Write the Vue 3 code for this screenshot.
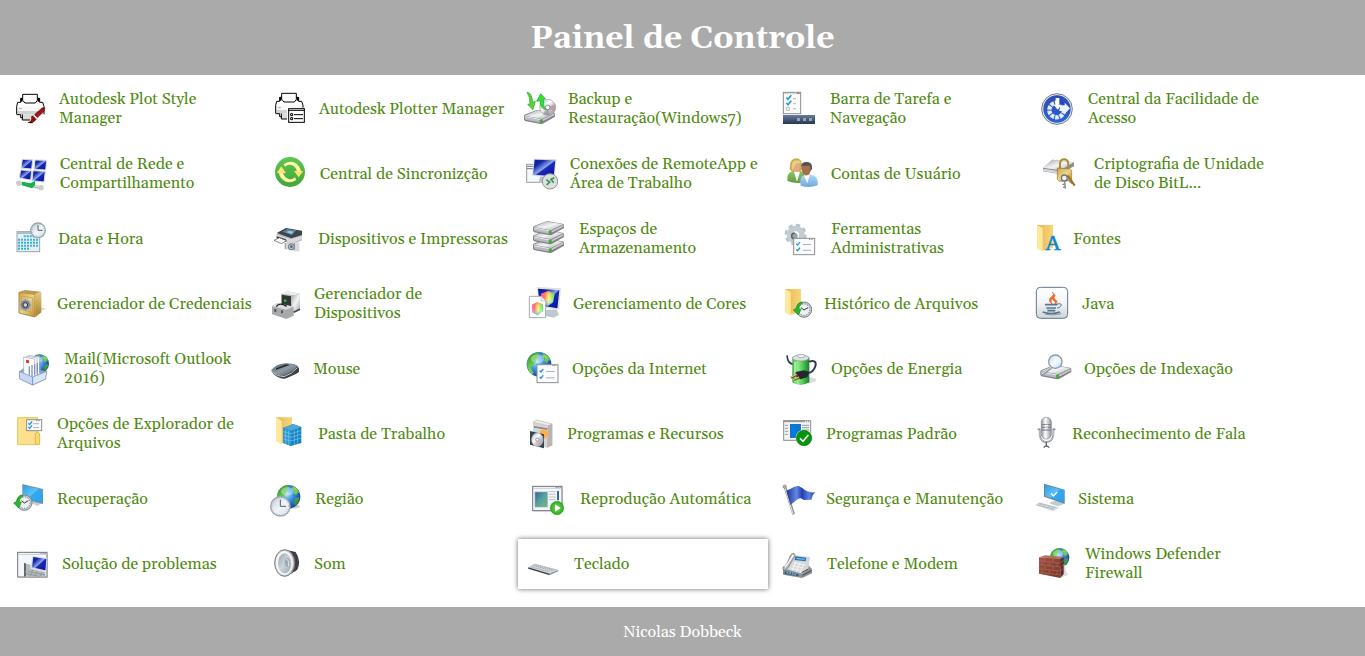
<script setup>
// Icons are drawn on a shared sheet, three sheet units per CSS pixel; each
// tile shows its own 50px-high slice of that sheet.
const clock = (x, y, r) => `
  <circle cx="${x}" cy="${y}" r="${r - 2}" fill="url(#clockFace)" stroke="#9aa6b0" stroke-width="4"/>
  <circle cx="${x}" cy="${y}" r="${r - 6}" fill="none" stroke="#7f8a94" stroke-width="2" stroke-dasharray="2 6"/>
  <path d="M${x} ${y - r * 0.65}V${y}H${x + r * 0.55}" fill="none" stroke="#4a6078" stroke-width="3"/>`

const rewind = (x, y, r) => `
  <circle cx="${x}" cy="${y}" r="${r - 1}" fill="#c6cccd" stroke="#7c8486" stroke-width="3"/>
  <circle cx="${x}" cy="${y}" r="${r - 7}" fill="#eef1f1" stroke="#666f71" stroke-width="3" stroke-dasharray="3 5"/>
  <path d="M${x - 9} ${y - 6}L${x} ${y + 1}L${x + 12} ${y - 6}" fill="none" stroke="#333" stroke-width="3"/>
  <path d="M${x - 8} ${y - r + 1}Q${x - 21} ${y - r + 4} ${x - 23} ${y - 4}L${x - 32} ${y + 1}L${x - 17} ${y + 16}L${x - 9} ${y - 1}L${x - 16} ${y - 3}Q${x - 15} ${y - 14} ${x - 4} ${y - r + 4}Z" fill="#25b92d" stroke="#178a20" stroke-width="2"/>`

const globe = (x, y, r) => `
  <circle cx="${x}" cy="${y}" r="${r}" fill="url(#ocean)"/>
  <path transform="translate(${x} ${y}) scale(${r / 36})" d="M-31 -18Q-20 -34 -4 -35L2 -30L-5 -26L0 -20L-10 -14L-8 -7L-17 -2L-13 6L-23 4L-22 16L-15 25L-21 29Q-42 8 -31 -18ZM12 -33Q28 -26 34 -10L28 -12L24 -4L15 -10L18 -18L9 -23ZM21 5L32 2Q34 16 22 28L15 22Z" fill="url(#land)"/>
  <ellipse cx="${x - 4}" cy="${y - r * 0.45}" rx="${r * 0.55}" ry="${r * 0.35}" fill="#fff" opacity=".35"/>`

const folder = (x, y, h) => `
  <path d="M${x} ${y}H${x + 48}V${y + h - 12}L${x + 16} ${y + h - 4}Z" fill="url(#folderBack)"/>
  <path d="M${x} ${y}L${x + 17} ${y + 10}V${y + h}L${x} ${y + h - 11}Z" fill="#ffe79c"/>`

const dialog = (x, y, w, h) => `
  <rect x="${x + 1}" y="${y + 1}" width="${w}" height="${h}" fill="#fbfbfb" stroke="#8b8f92" stroke-width="3"/>
  <path d="M${x + w - 16} ${y + 4}h12" stroke="#80858a" stroke-width="3" stroke-dasharray="3 2"/>
  <path d="M${x + w * 0.14} ${y + h * 0.35}l4 4l7 -9M${x + w * 0.14} ${y + h * 0.7}l4 4l7 -9" fill="none" stroke="#2f95d4" stroke-width="4"/>
  <path d="M${x + w * 0.45} ${y + h * 0.4}h${w * 0.4}M${x + w * 0.45} ${y + h * 0.75}h${w * 0.4}" stroke="#aab2b8" stroke-width="3"/>`

const drive = (x, y) => `
  <path d="M${x} ${y + 19}Q${x} ${y + 15} ${x + 5} ${y + 13}L${x + 36} ${y + 1}Q${x + 41} ${y - 1} ${x + 46} ${y}L${x + 88} ${y + 7}Q${x + 93} ${y + 8} ${x + 93} ${y + 12}V${y + 20}L${x + 56} ${y + 41}L${x + 50} ${y + 42}L${x + 3} ${y + 33}L${x} ${y + 29}Z" fill="#808286"/>
  <path d="M${x + 2} ${y + 17}L${x + 36} ${y + 2}Q${x + 41} ${y} ${x + 46} ${y + 1}L${x + 90} ${y + 9}L${x + 54} ${y + 27}Z" fill="url(#metal)"/>
  <path d="M${x + 2} ${y + 20}L${x + 50} ${y + 29}V${y + 38}L${x + 4} ${y + 29}Z" fill="#b9bac3"/>
  <path d="M${x + 3} ${y + 20}L${x + 50} ${y + 29}" stroke="#eceef2" stroke-width="3"/>
  <path d="M${x + 56} ${y + 31}L${x + 91} ${y + 13}" stroke="#c9cacc" stroke-width="5"/>
  <path d="M${x + 50} ${y + 29}v10" stroke="#2bbf1f" stroke-width="6"/>`

const win = (x, y, w, h) => `
  <rect x="${x + 3}" y="${y + 4}" width="${w}" height="${h}" fill="#ddd"/>
  <rect x="${x + 1}" y="${y + 1}" width="${w}" height="${h}" fill="#f4f6f8" stroke="#6f767e" stroke-width="3"/>
  <path d="M${x + 2} ${y + 7}h${w - 2}" stroke="#c8ced5" stroke-width="3"/>
  <path d="M${x + w - 18} ${y + 4}h15" stroke="#5f6a75" stroke-width="3" stroke-dasharray="3 3"/>`

const printer = (x, y) => `
  <path d="M${x + 2} ${y + 36}V${y + 26}H${x + 14}V${y + 14}H${x + 72}V${y + 26}H${x + 84}V${y + 62}H${x + 72}V${y + 69}H${x + 18}V${y + 62}H${x + 2}Z" fill="#fff"/>
  <path d="M${x + 4} ${y + 40}H${x + 82}V${y + 62}H${x + 4}Z" fill="#d2d2d2"/>
  <path d="M${x + 4} ${y + 38}H${x + 80}V${y + 52}H${x + 4}Z" fill="#f8f8f8"/>
  <path d="M${x + 2} ${y + 62}V${y + 38}L${x + 5} ${y + 26}H${x + 14}V${y + 14}H${x + 20}M${x + 65} ${y + 14}H${x + 71}V${y + 26}H${x + 80}L${x + 84} ${y + 38}V${y + 62}M${x + 2} ${y + 63}H${x + 14}V${y + 72}H${x + 22}" fill="none" stroke="#000" stroke-width="3"/>
  <path d="M${x + 9} ${y + 45}h9" stroke="#aaa" stroke-width="3"/>
  <path d="M${x + 20} ${y + 2}H${x + 64}V${y + 20}L${x + 58} ${y + 28}H${x + 27}L${x + 20} ${y + 20}Z" fill="#fff" stroke="#000" stroke-width="3"/>
  <path d="M${x + 14} ${y + 14}h5v10h-5ZM${x + 65} ${y + 14}h6v10h-6Z" fill="#000"/>
  <path d="M${x + 19} ${y + 62}h42v8l-10 9h-30Z" fill="#dcdcdc"/>
  <path d="M${x + 19} ${y + 62}V${y + 79}H${x + 42}" fill="none" stroke="#000" stroke-width="3"/>`

const shield = (d) =>
  `<path d="${d}" fill="url(#rainbow)"/><path d="${d}" fill="url(#rainbowFade)"/>`

const items = [
  { label: 'Autodesk Plot Style\nManager', w: 51, art: printer(48, 56) + '<path d="M83 142Q95 139 94 128L102 124L108 131Q101 143 83 144Z" fill="#a50000"/><path d="M88 143H98L110 131M93 127L101 122" fill="none" stroke="#000" stroke-width="3"/><path d="M103 120L127 99H135L133 106L111 128Z" fill="#b80c0c"/><path d="M104 119L126 99H136M112 129L134 106" fill="none" stroke="#000" stroke-width="2"/><path d="M101 121L110 130" stroke="#fff" stroke-width="4"/>' },
  { label: 'Autodesk Plotter Manager', w: 56, art: printer(45, 53) + '<rect x="81" y="98" width="58" height="50" fill="#fff"/><rect x="86" y="101" width="47" height="41" fill="#fff" stroke="#000" stroke-width="3"/><path d="M85 106h49" stroke="#000" stroke-width="3"/><path d="M92 116h6v6h-6zM92 128h6v6h-6z" fill="#fff" stroke="#000" stroke-width="3"/><path d="M102 119h27M102 131h27" stroke="#000" stroke-width="3"/>' },
  { label: 'Backup e\nRestauração(Windows7)', w: 50, art: drive(27, 105) + '<circle cx="98" cy="97" r="24" fill="url(#disc)" stroke="#9a9da5" stroke-width="2"/><path d="M98 97L121 88Q124 98 118 110Z" fill="#b58a97" opacity=".6"/><path d="M98 97L84 116Q94 123 104 120Z" fill="#7d868c" opacity=".5"/><circle cx="98" cy="97" r="7" fill="#fff" stroke="#888" stroke-width="3"/><path d="M36 52Q50 52 53 82L61 79L54 104L38 88L45 87Q45 65 36 52Z" fill="#54d634" stroke="#2b9c22" stroke-width="2"/><path d="M92 104Q76 101 75 77L65 79L77 56L91 71L85 74Q84 93 92 104Z" fill="#39dd35" stroke="#1ca31e" stroke-width="2"/>' },
  { label: 'Barra de Tarefa e\nNavegação', w: 57, art: '<rect x="40" y="52" width="52" height="64" fill="#fbfbfb" stroke="#8b8b8b" stroke-width="3"/><path d="M42 56h46" stroke="#bbb" stroke-width="2"/><path d="M81 55h8" stroke="#d94a4a" stroke-width="3"/><path d="M49 68l5 5l10-12M49 84l5 5l10-12" fill="none" stroke="#269bd3" stroke-width="5"/><path d="M49 97h9v9h-9z" fill="none" stroke="#b9b9b9" stroke-width="3"/><path d="M69 71h9M69 86h9M69 101h9" stroke="#bbb" stroke-width="3"/><rect x="39" y="120" width="96" height="27" fill="url(#bar)"/><path d="M81 129h9v9h-9zM99 129h9v9h-9zM117 129h9v9h-9z" fill="#97a3b9"/>' },
  { label: 'Central da Facilidade de\nAcesso', w: 60, art: '<circle cx="96" cy="102" r="46" fill="#e4e6ea" stroke="#777e88" stroke-width="3"/><circle cx="96" cy="102" r="41" fill="url(#royal)"/><circle cx="95" cy="105" r="22" fill="none" stroke="#e6ecfb" stroke-width="13" stroke-dasharray="11 3"/><path d="M97 66L134 99L97 102Z" fill="#1e4fc0"/><path d="M92 69h11v20h7l-12 15l-12-15h6z" fill="#fff"/><path d="M106 91h13v-8l16 17l-16 17v-9h-16z" fill="#f0f4ff"/>' },

  { label: 'Central de Rede e\nCompartilhamento', w: 52, art: '<g stroke="#d7dcde" stroke-width="3" fill="url(#navy)"><path d="M67 253L98 254L95 282L63 279Z"/><path d="M105 255L140 256L137 285L102 283Z"/><path d="M62 285L95 287L92 315L58 309Z"/><path d="M99 287L136 289L132 321L96 317Z"/></g><path d="M50 322L128 340" stroke="#aeb6b6" stroke-width="9"/><path d="M50 321L127 338" stroke="#eef1f1" stroke-width="3"/><circle cx="57" cy="325" r="8" fill="#c7cecc"/><circle cx="123" cy="338" r="8" fill="#c7cecc"/><path d="M66 320L92 325L105 317V331L96 340L66 331Z" fill="#13b350"/>' },
  { label: 'Central de Sincronizção', w: 57, art: '<circle cx="90" cy="291" r="45" fill="url(#sync)"/><g fill="#fff3a5"><path d="M71 268Q97 251 116 273Q122 281 123 290H111Q107 273 94 270Q83 267 75 275Z"/><path d="M109 315Q83 331 63 309Q57 301 56 291H68Q73 308 86 312Q97 315 105 307Z"/></g><g fill="#ffe36c"><path d="M102 288H130L116 307Z"/><path d="M50 294L64 274L78 294Z"/></g>' },
  { label: 'Conexões de RemoteApp e\nÁrea de Trabalho', w: 52, art: '<rect x="35" y="268" width="46" height="54" fill="#f6f7f8" stroke="#999fa5" stroke-width="3"/><path d="M36 274h18M36 281h18" stroke="#6e7c8d" stroke-width="3"/><path d="M75 306H100L107 320L70 325Z" fill="#b7bfc9"/><path d="M56 251L124 253L119 307L51 302Z" fill="#d7dce4"/><path d="M59 254L121 256L116 303L54 299Z" fill="url(#navy)"/><circle cx="105" cy="319" r="23" fill="#dedfdf" stroke="#919494" stroke-width="3"/><path d="M94 314L104 321L95 330M118 308L108 313L116 323" fill="none" stroke="#3a9150" stroke-width="5"/>' },
  { label: 'Contas de Usuário', w: 58, art: '<path d="M52 318Q50 294 67 288L86 284L103 294V322Q75 327 52 318Z" fill="url(#greenBody)"/><path d="M71 288L81 320L90 290Z" fill="#fff"/><path d="M59 282Q58 250 79 250Q99 250 97 283L88 290H66Z" fill="#c9ab50"/><ellipse cx="80" cy="274" rx="11" ry="17" fill="#e2aa82"/><path d="M65 281Q62 254 82 256Q91 256 94 265Q75 259 69 286Z" fill="#e6d27c"/><path d="M92 332Q88 306 99 302L116 297L135 304Q146 313 143 331Q116 341 92 332Z" fill="url(#blueBody)"/><path d="M102 302L112 325L119 300Z" fill="#fff"/><ellipse cx="109" cy="282" rx="14" ry="19" fill="#a76f4d"/><path d="M94 276Q93 260 111 261Q128 261 126 282L122 289L120 272H98Z" fill="#4d5257"/>' },
  { label: 'Criptografia de Unidade\nde Disco BitL...', w: 66, art: '<path d="M54 279L82 254L147 262V274L103 297L55 289Z" fill="#8b8d93"/><path d="M54 278L82 254L147 262L105 286Z" fill="url(#metal)"/><path d="M55 281L103 289V296L55 288Z" fill="#d7d8df"/><path d="M105 283V266Q106 253 118 253Q130 254 130 269V284" fill="none" stroke="#b18a35" stroke-width="6"/><path d="M97 279L134 282L140 287V317L103 319L97 313Z" fill="url(#gold)" stroke="#9d761f" stroke-width="2"/><path d="M128 302L137 314L149 332M137 314L136 323M143 322L139 326" fill="none" stroke="#9a7424" stroke-width="6"/><circle cx="118" cy="309" r="9" fill="#eee" stroke="#737678" stroke-width="4"/><path d="M119 318L121 341M120 327L112 329M120 335L114 337" stroke="#84888c" stroke-width="4"/>' },

  { label: 'Data e Hora', w: 50, art: '<rect x="51" y="470" width="68" height="60" fill="#e8eef2" stroke="#9aa5ad" stroke-width="3"/><path d="M52 471h67v6h-67z" fill="#b0bdc7"/><path d="M71 484h46M54 494h63M54 503h63M54 512h63M54 521h36" stroke="#34b5d3" stroke-width="6" stroke-dasharray="6 3"/>' + clock(114, 466, 24) },
  { label: 'Dispositivos e Impressoras', w: 55, art: '<path d="M50 476V492L96 508L126 496V478Z" fill="#b6b9bc"/><path d="M50 474L78 459L126 467V480L94 490Z" fill="#3f444a"/><path d="M67 470L82 462L109 466L96 480Z" fill="#5f7f98"/><path d="M78 471L88 467L101 470L94 477Z" fill="#8ecbf0"/><path d="M50 479L94 493L126 482V492L94 505L50 488Z" fill="#d8dadd"/><path d="M50 484L78 493V500L50 490Z" fill="#333"/><path d="M42 496L58 488L80 497L64 506Z" fill="#f8f8f8" stroke="#555" stroke-width="2"/><path d="M74 502L86 505L88 499L99 502L101 498L118 503V530L74 523Z" fill="#d8d9dc"/><path d="M76 504V522M103 502V526" stroke="#999ca0" stroke-width="3"/><circle cx="94" cy="515" r="9" fill="#b8c2cb" stroke="#697179" stroke-width="3"/><circle cx="94" cy="515" r="4" fill="#526475"/>' },
  { label: 'Espaços de\nArmazenamento', w: 61, art: drive(54, 492) + drive(54, 466) + drive(54, 439) },
  { label: 'Ferramentas\nAdministrativas', w: 58, art: '<circle cx="77" cy="479" r="28" fill="none" stroke="#b5c2ca" stroke-width="10" stroke-dasharray="12 10"/><circle cx="77" cy="479" r="19" fill="none" stroke="#c2ccd2" stroke-width="17"/><circle cx="73" cy="483" r="10" fill="#9aa3a9"/><path d="M74 474A9 9 0 0 0 74 492" fill="none" stroke="#555d63" stroke-width="4"/>' + dialog(70, 489, 63, 49) },
  { label: 'Fontes', w: 45, art: folder(36, 450, 81) + '<text x="84" y="524" text-anchor="middle" font-family="Liberation Serif, serif" font-size="64" fill="#0b87ce" stroke="#0b87ce" stroke-width="2">A</text>' },

  { label: 'Gerenciador de Credenciais', w: 49, art: '<path d="M104 718L139 700L120 698Z" fill="#ddd"/><path d="M57 651L75 645L124 650L106 658Z" fill="#b99a52"/><path d="M57 652L105 658V726L57 714Z" fill="url(#gold)" stroke="#b28a34" stroke-width="3"/><path d="M105 658L124 650V712L106 726Z" fill="url(#goldSide)"/><path d="M64 663L98 669V712L64 704Z" fill="none" stroke="#caa651" stroke-width="3"/><circle cx="76" cy="690" r="16" fill="#75797d" stroke="#b3b7ba" stroke-width="5"/><path d="M76 672v36M59 690h34M64 678l24 24M88 678l-24 24" stroke="#8b8f93" stroke-width="3"/><circle cx="76" cy="690" r="7" fill="#cfd2d4" stroke="#34383a" stroke-width="3"/>' },
  { label: 'Gerenciador de\nDispositivos', w: 51, art: '<path d="M64 657L82 649L120 656V703L98 714L64 702Z" fill="#b8babc"/><path d="M64 656L82 649L120 656L102 661Z" fill="#eee"/><path d="M65 659L93 664V701L65 695Z" fill="#303634"/><path d="M93 662L120 657V703L98 711Z" fill="url(#metal)"/><path d="M72 677h7" stroke="#21e437" stroke-width="6"/><path d="M36 694L52 684L101 695V722L79 732L36 718Z" fill="#a7aaac"/><path d="M36 694L52 684L101 695L78 704Z" fill="#ddd"/><path d="M49 695Q58 680 80 694" fill="none" stroke="#222" stroke-width="4"/><path d="M46 702v9M66 706v9" stroke="#55595a" stroke-width="6"/><path d="M101 712L120 703" stroke="#444" stroke-width="5"/>' },
  { label: 'Gerenciamento de Cores', w: 55, art: '<path d="M91 705L125 703L132 720L116 728L89 722Z" fill="#c1c8cd"/><path d="M66 636L138 640L132 704L72 697Z" fill="#dce0e4"/><path d="M69 641L133 646L127 700L74 691Z" fill="url(#navy)"/>' + shield('M78 656L100 648L119 656L114 682L98 693L80 682Z') + '<path d="M43 664H78L92 677V728H43Z" fill="#fff" stroke="#aaa" stroke-width="3"/><path d="M78 664V678H92" fill="#eee" stroke="#bbb" stroke-width="2"/>' + shield('M51 689L67 682L84 688V708L68 721L52 712Z') },
  { label: 'Histórico de Arquivos', w: 51, art: folder(45, 642, 81) + rewind(102, 704, 24) },
  { label: 'Java', w: 54, art: '<rect x="34" y="637" width="94" height="93" rx="12" fill="url(#javaBg)" stroke="#60798c" stroke-width="3"/><path d="M82 651Q90 659 80 665Q65 675 82 688Q74 675 84 669Q94 661 82 651ZM91 661Q74 672 91 680Q92 684 87 690Q100 683 94 676Q82 670 91 661Z" fill="#ef6934" stroke="#ef6934" stroke-width="2"/><path d="M60 689H97M64 699H93M67 707H91" stroke="#56768f" stroke-width="5"/><path d="M96 687Q114 684 107 694Q103 699 96 699" fill="none" stroke="#56768f" stroke-width="3"/><path d="M53 711Q78 720 105 711" fill="none" stroke="#56768f" stroke-width="4"/><path d="M61 718Q85 722 109 716" fill="none" stroke="#7d95a8" stroke-width="3"/>' },

  { label: 'Mail(Microsoft Outlook\n2016)', w: 56, art: globe(119, 71, 28) + '<path d="M58 94L75 82L140 94L137 118L98 136L60 117Z" fill="#8ba3d1"/><g fill="#fff" stroke="#9ba7b8" stroke-width="2"><path d="M86 46L119 51V104L86 99Z"/><path d="M79 48L111 54V109L79 103Z"/><path d="M71 51L104 57V112L71 105Z"/></g><path d="M78 59l9 2v9l-9-2z" fill="#e73d22"/><path d="M88 79V105M96 75V108M104 72V104M112 68V101M120 65V97" stroke="#7e97b8" stroke-width="4"/><path d="M58 94L98 111V135L59 117Z" fill="#c9d7f3" stroke="#7088bc" stroke-width="2"/><path d="M98 111L140 94L137 117L98 135Z" fill="#dbe5f8" stroke="#7088bc" stroke-width="2"/>' },
  { label: 'Mouse', w: 50, art: '<path d="M35 96Q53 117 74 116Q103 106 117 96V85Q111 72 93 71Z" fill="#3b4147"/><path d="M33 91Q49 72 75 70Q96 68 113 78Q96 98 70 107Q46 108 33 91Z" fill="url(#mouse)"/><path d="M35 95Q52 111 72 110Q97 102 112 83" fill="none" stroke="#c3cad0" stroke-width="3"/><path d="M48 89L82 77L89 75L79 73L48 85Z" fill="#22272b"/>' },
  { label: 'Opções da Internet', w: 54, art: globe(72, 73, 37) + dialog(65, 73, 63, 54) },
  { label: 'Opções de Energia', w: 58, art: '<ellipse cx="110" cy="120" rx="29" ry="10" fill="#ddd"/><path d="M51 46Q53 72 71 73" fill="none" stroke="#353b50" stroke-width="5"/><path d="M67 52V127Q91 143 118 127V52Q92 40 67 52Z" fill="url(#battery)"/><ellipse cx="92" cy="54" rx="25" ry="9" fill="#dbe0e2" stroke="#8b9293" stroke-width="2"/><ellipse cx="94" cy="48" rx="11" ry="5" fill="#f2f5f7" stroke="#89949b" stroke-width="2"/><path d="M75 65V126" stroke="#e0f7dd" stroke-width="5" opacity=".7"/><path d="M117 65Q139 58 137 76Q130 99 114 99" fill="none" stroke="#353b50" stroke-width="6"/><path d="M77 96L102 91L118 96L112 112L91 118L77 108Z" fill="#252831"/><path d="M82 104L63 113M88 112L71 120" stroke="#75531d" stroke-width="7"/><path d="M80 103L63 111M87 111L70 119" stroke="#f1dc97" stroke-width="3"/>' },
  { label: 'Opções de Indexação', w: 56, art: drive(46, 76) + '<path d="M77 83L50 105" stroke="#8d94a0" stroke-width="8"/><path d="M77 82L50 103" stroke="#edf0f2" stroke-width="3"/><circle cx="91" cy="65" r="20" fill="url(#lens)" stroke="#8f9aa3" stroke-width="4"/>' },

  { label: 'Opções de Explorador de\nArquivos', w: 49, art: '<path d="M53 233H113V314H53Z" fill="#fce08b" stroke="#e5c558" stroke-width="3"/><path d="M60 236V313" stroke="#f8e8ad" stroke-width="3"/><path d="M106 313V282Q113 270 119 282V313Z" fill="#f7d779" stroke="#dfb948" stroke-width="3"/>' + dialog(79, 238, 45, 33) },
  { label: 'Pasta de Trabalho', w: 55, art: folder(48, 232, 82) + '<path d="M69 264L99 252L124 261V309L92 318L69 309Z" fill="#1682c4"/><path d="M69 264L99 252L124 261L94 272Z" fill="#4aa9da"/><path d="M69 266L94 273V317L69 308Z" fill="#2f98d2"/><path d="M71 275L93 281L123 272M71 286L93 292L123 283M71 297L93 303L123 294M77 268V311M86 271V314M103 271V314M113 268V311" fill="none" stroke="#79c8f0" stroke-width="2"/>' },
  { label: 'Programas e Recursos', w: 49, art: '<path d="M54 247L65 240L112 252V316L96 323L54 308Z" fill="#d7d4d4"/><path d="M54 247L65 240L112 252L99 257Z" fill="#eee" stroke="#bbb" stroke-width="2"/><path d="M99 257L112 252V316L96 323Z" fill="#b9b3b2"/><path d="M57 258L97 265V270L57 263Z" fill="#8e8585"/><circle cx="86" cy="282" r="14" fill="#ffad51"/><path d="M54 269Q63 258 76 270L70 287L55 283Z" fill="#c3ded7"/><path d="M45 273L87 283V325L45 314Z" fill="#39434d"/><ellipse cx="67" cy="299" rx="17" ry="20" fill="url(#disc)" stroke="#ccc" stroke-width="2"/><circle cx="67" cy="299" r="5" fill="#fff" stroke="#8e979f" stroke-width="3"/>' },
  { label: 'Programas Padrão', w: 53, art: '<rect x="41" y="242" width="81" height="59" fill="#f4f4f4" stroke="#8c8c8c" stroke-width="3"/><path d="M41 244h81" stroke="#9a9a9a" stroke-width="5"/><path d="M105 244h15" stroke="#fff" stroke-width="3" stroke-dasharray="3 3"/><path d="M45 256h9M45 265h9M45 274h9M45 283h9M96 256h21M96 263h21M96 270h21" stroke="#999" stroke-width="3"/><rect x="60" y="252" width="33" height="42" fill="#0878d6"/><circle cx="102" cy="294" r="25" fill="#fff"/><circle cx="102" cy="294" r="23" fill="#07950b" stroke="#08720a" stroke-width="2"/><path d="M90 295l9 9l16-19" fill="none" stroke="#fff" stroke-width="5"/>' },
  { label: 'Reconhecimento de Fala', w: 44, art: '<path d="M38 268h6v19Q49 306 64 306Q81 306 85 287V268h6" fill="none" stroke="#7f838d" stroke-width="5"/><path d="M39 270h4v19Q48 304 64 304Q81 304 86 289V270" fill="none" stroke="#e4e6eb" stroke-width="2"/><rect x="49" y="232" width="30" height="65" rx="14" fill="url(#mic)" stroke="#82858d" stroke-width="2"/><path d="M50 254h28M50 262h28M50 270h28" stroke="#737780" stroke-width="3"/><path d="M60 256h9M60 264h9" stroke="#fff" stroke-width="3"/><path d="M64 305V320M56 323Q64 313 73 323" fill="none" stroke="#5f636e" stroke-width="4"/>' },

  { label: 'Recuperação', w: 49, art: '<path d="M88 487L108 480L127 489L112 498Z" fill="#c7cdd0"/><path d="M67 432L129 447V492L67 477Z" fill="#7d9197"/><path d="M69 435L127 449V488L69 474Z" fill="url(#screen)"/>' + rewind(73, 488, 24) },
  { label: 'Região', w: 52, art: '<ellipse cx="95" cy="499" rx="25" ry="7" fill="#ccc"/>' + globe(86, 470, 35) + clock(61, 499, 31) },
  { label: 'Reprodução Automática', w: 62, art: win(52, 438, 88, 73) + '<rect x="60" y="456" width="37" height="45" fill="url(#picture)" stroke="#9daab5" stroke-width="2"/><path d="M101 455h21M101 463h21M101 471h21M101 479h21" stroke="#bdc3c9" stroke-width="3"/><path d="M129 453v28" stroke="#3467a8" stroke-width="6"/><circle cx="126" cy="504" r="20" fill="url(#play)" stroke="#36a425" stroke-width="2"/><path d="M120 493L137 504L120 515Z" fill="#fff"/>' },
  { label: 'Segurança e Manutenção', w: 53, art: '<path d="M46 444L71 523" stroke="#8e9095" stroke-width="8"/><path d="M45 444L69 522" stroke="#e8e8eb" stroke-width="3"/><circle cx="44" cy="440" r="5" fill="#b6b8bb" stroke="#777" stroke-width="2"/><path d="M49 452L62 446Q76 436 86 438L98 445Q112 459 135 457Q126 465 124 479L101 480Q91 470 80 480L61 495Z" fill="url(#flag)"/>' },
  { label: 'Sistema', w: 50, art: '<path d="M71 489L103 477L119 491L99 499Z" fill="#bfcdd3"/><path d="M57 431L119 449V491L57 470Z" fill="#688491"/><path d="M60 435L117 451V487L60 468Z" fill="url(#screen)"/><path d="M78 460l7 8l12-12" fill="none" stroke="#fff" stroke-width="4"/><path d="M30 495L43 487L103 503L84 514Z" fill="#d4dde1"/><path d="M37 495L87 508M42 490L94 503M48 490L43 497M60 493L55 501M73 497L68 505M85 500L80 508" stroke="#a3afb5" stroke-width="2"/>' },

  { label: 'Solução de problemas', w: 54, art: win(52, 636, 88, 74) + '<path d="M72 668L79 671V707L72 710Z" fill="#5f6669"/><path d="M79 671L92 674V704L79 708Z" fill="#b4babd"/><path d="M76 694L94 686L136 697V710L83 710Z" fill="#b3b9bc"/><path d="M97 648L141 654L137 695L92 685Z" fill="#d4dce4"/><path d="M100 651L139 657L136 691L96 682Z" fill="url(#navy)"/><path d="M83 694L136 705M76 700L117 709M98 690L90 708M112 695L103 709M126 698L119 710" stroke="#848d94" stroke-width="2"/>' },
  { label: 'Som', w: 51, art: '<path d="M75 629L107 636Q125 666 111 690L79 709Z" fill="#38383b"/><path d="M96 634V701M105 637V695M112 647V687" stroke="#55555a" stroke-width="2"/><ellipse cx="74" cy="669" rx="30" ry="40" fill="#c0c1c6" stroke="#808188" stroke-width="3"/><ellipse cx="73" cy="669" rx="26" ry="36" fill="#f4f6f6"/><ellipse cx="74" cy="670" rx="20" ry="30" fill="url(#cone)"/><ellipse cx="82" cy="667" rx="8" ry="13" fill="#9da9b4"/><path d="M78 657Q90 661 85 678" fill="none" stroke="#e8edf0" stroke-width="3"/>' },
  { label: 'Teclado', w: 56, active: true, art: '<path d="M39 683L58 671L130 690V694L103 706L39 686Z" fill="#8a8f95"/><path d="M40 682L60 671L130 690L103 701Z" fill="#d2d6da"/><path d="M49 681L103 696M55 677L113 692M60 674L120 690" stroke="#9198a0" stroke-width="2" stroke-dasharray="5 2"/><path d="M40 684L103 703" fill="none" stroke="#30363d" stroke-width="3"/>' },
  { label: 'Telefone e Modem', w: 54, art: '<path d="M39 686L65 660L112 673L126 687V700L96 714L39 704Z" fill="#8b8e92"/><path d="M39 685L78 646L120 651L115 688L95 701Z" fill="#d4d6d9"/><path d="M76 649L109 653L107 664L74 660Z" fill="#286eaa"/><path d="M80 653L104 656V660L79 657Z" fill="#70c5ea"/><path d="M70 669L104 675M66 677L99 684M62 684L93 691M80 663L67 690M91 666L79 695M103 671L90 698" stroke="#f2f4f6" stroke-width="3"/><path d="M39 681Q47 680 57 657Q61 640 72 640Q79 645 70 656L55 681Q48 694 39 689Z" fill="#b9bcc1" stroke="#6a6e73" stroke-width="2"/><path d="M45 681Q60 663 70 645" fill="none" stroke="#fff" stroke-width="4"/><path d="M44 694L85 703V709L44 702Z" fill="#2a6077"/><path d="M50 698L81 705" stroke="#80c1d6" stroke-width="4" stroke-dasharray="5 3"/><path d="M98 706L124 692M95 698L115 687" stroke="#444a50" stroke-width="3"/>' },
  { label: 'Windows Defender\nFirewall', w: 57, art: '<path d="M108 713L130 704L120 692Z" fill="#ddd"/>' + globe(104, 653, 29) + '<path d="M109 711L123 696L119 674L112 671Z" fill="#d7d7d7"/><path d="M42 652L61 646L116 651L106 657Z" fill="#b5705c"/><path d="M42 652L106 657V714L42 701Z" fill="url(#brick)"/><path d="M106 657L116 651V702L106 714Z" fill="#5c271f"/><path d="M42 662L106 669M42 674L106 681M42 686L106 693M42 697L106 705M59 653V664M83 656V667M51 664V675M73 666V678M96 669V680M60 676V688M84 679V691M51 688V699M73 690V703M96 693V705M106 669L116 661M106 681L116 673M106 693L116 685" fill="none" stroke="#a8695a" stroke-width="2"/>' }
]

const sheetTops = [27, 222, 417, 612, 12, 207, 402, 597]
const viewBoxOf = (item, i) =>
  `${i % 5 === 0 ? 24 : 9} ${sheetTops[Math.floor(i / 5)]} ${item.w * 3} 150`
</script>

<template>
  <div class="page">
    <header class="header">
      <h1>Painel de Controle</h1>
    </header>

    <main class="grid">
      <a
        v-for="(item, i) in items"
        :key="item.label"
        href="#"
        class="tile"
        :class="{ active: item.active }"
      >
        <svg
          class="icon"
          :width="item.w"
          height="50"
          :viewBox="viewBoxOf(item, i)"
          aria-hidden="true"
          v-html="item.art"
        ></svg>
        <span class="label">{{ item.label }}</span>
      </a>
    </main>

    <footer class="footer">Nicolas Dobbeck</footer>

    <svg class="paints" width="0" height="0" aria-hidden="true">
      <defs>
        <linearGradient id="navy" x1="0" y1="0" x2="1" y2="1"><stop offset="0" stop-color="#0b1b8e" /><stop offset=".25" stop-color="#1327ac" /><stop offset=".5" stop-color="#8fa6ea" /><stop offset=".55" stop-color="#1a2cb8" /><stop offset="1" stop-color="#0308a0" /></linearGradient>
        <linearGradient id="metal" x1="0" y1="0" x2="1" y2="1"><stop offset="0" stop-color="#9fa3a5" /><stop offset=".5" stop-color="#f4f4f5" /><stop offset="1" stop-color="#a2a6a8" /></linearGradient>
        <linearGradient id="folderBack" x1="0" y1="0" x2="1" y2="0"><stop offset="0" stop-color="#e6b856" /><stop offset="1" stop-color="#f7d778" /></linearGradient>
        <radialGradient id="ocean" cx=".4" cy=".4" r=".6"><stop offset="0" stop-color="#9de7ff" /><stop offset=".5" stop-color="#3e91df" /><stop offset="1" stop-color="#1746a2" /></radialGradient>
        <linearGradient id="land" x1="0" y1="0" x2="1" y2="1"><stop offset="0" stop-color="#238b27" /><stop offset=".5" stop-color="#7fdc4f" /><stop offset="1" stop-color="#1d6e31" /></linearGradient>
        <linearGradient id="clockFace" x1="0" y1="0" x2="1" y2="1"><stop offset="0" stop-color="#b9c6cf" /><stop offset=".5" stop-color="#f2f5f7" /><stop offset="1" stop-color="#d5e1ea" /></linearGradient>
        <linearGradient id="disc" x1="0" y1="0" x2="1" y2="1"><stop offset="0" stop-color="#a4afb2" /><stop offset=".4" stop-color="#fff" /><stop offset=".6" stop-color="#d0c3cf" /><stop offset="1" stop-color="#8c9aa6" /></linearGradient>
        <linearGradient id="bar" x1="0" y1="0" x2="0" y2="1"><stop offset="0" stop-color="#697c9e" /><stop offset="1" stop-color="#27364f" /></linearGradient>
        <linearGradient id="royal" x1="0" y1="0" x2="0" y2="1"><stop offset="0" stop-color="#2e4bb2" /><stop offset="1" stop-color="#2c62d8" /></linearGradient>
        <linearGradient id="sync" x1="0" y1="0" x2="0" y2="1"><stop offset="0" stop-color="#5ec653" /><stop offset="1" stop-color="#40a63a" /></linearGradient>
        <linearGradient id="greenBody" x1="0" y1="0" x2="0" y2="1"><stop offset="0" stop-color="#92c968" /><stop offset="1" stop-color="#649b43" /></linearGradient>
        <linearGradient id="blueBody" x1="0" y1="0" x2="0" y2="1"><stop offset="0" stop-color="#b1ddfb" /><stop offset="1" stop-color="#6fa6d9" /></linearGradient>
        <linearGradient id="gold" x1="0" y1="0" x2="1" y2="1"><stop offset="0" stop-color="#cda24a" /><stop offset=".5" stop-color="#ecd68a" /><stop offset="1" stop-color="#ba8b31" /></linearGradient>
        <linearGradient id="goldSide" x1="0" y1="0" x2="0" y2="1"><stop offset="0" stop-color="#e6cd80" /><stop offset="1" stop-color="#a57c2a" /></linearGradient>
        <linearGradient id="rainbow" x1="0" y1="0" x2="1" y2="0"><stop offset="0" stop-color="#ff2fd0" /><stop offset=".25" stop-color="#ff5a3a" /><stop offset=".55" stop-color="#fff05a" /><stop offset="1" stop-color="#2fe04a" /></linearGradient>
        <linearGradient id="rainbowFade" x1="0" y1="0" x2="0" y2="1"><stop offset="0" stop-color="#ff3b2f" stop-opacity=".6" /><stop offset=".35" stop-color="#fff" stop-opacity=".15" /><stop offset=".6" stop-color="#fff" stop-opacity=".3" /><stop offset="1" stop-color="#18b8ff" stop-opacity=".9" /></linearGradient>
        <linearGradient id="javaBg" x1="0" y1="0" x2="0" y2="1"><stop offset="0" stop-color="#fff" /><stop offset=".5" stop-color="#f2f4f5" /><stop offset="1" stop-color="#cfd4d8" /></linearGradient>
        <linearGradient id="mouse" x1="0" y1="0" x2="1" y2="1"><stop offset="0" stop-color="#535d66" /><stop offset=".5" stop-color="#8e9aa4" /><stop offset="1" stop-color="#4b555e" /></linearGradient>
        <linearGradient id="battery" x1="0" y1="0" x2="1" y2="0"><stop offset="0" stop-color="#3ca943" /><stop offset=".3" stop-color="#8fee88" /><stop offset=".6" stop-color="#52cc57" /><stop offset="1" stop-color="#1d7c2b" /></linearGradient>
        <linearGradient id="lens" x1="0" y1="0" x2="1" y2="1"><stop offset="0" stop-color="#c3dff2" /><stop offset=".5" stop-color="#f6fcff" /><stop offset="1" stop-color="#b9d9f0" /></linearGradient>
        <linearGradient id="mic" x1="0" y1="0" x2="1" y2="0"><stop offset="0" stop-color="#8b8f99" /><stop offset=".4" stop-color="#fff" /><stop offset="1" stop-color="#8f929c" /></linearGradient>
        <linearGradient id="screen" x1="0" y1="0" x2="1" y2="1"><stop offset="0" stop-color="#27a1e8" /><stop offset=".5" stop-color="#65bff7" /><stop offset=".52" stop-color="#31aaf2" /><stop offset="1" stop-color="#2ba1f1" /></linearGradient>
        <linearGradient id="picture" x1="0" y1="0" x2="1" y2="1"><stop offset="0" stop-color="#31629a" /><stop offset=".5" stop-color="#56a3a0" /><stop offset="1" stop-color="#77b879" /></linearGradient>
        <radialGradient id="play"><stop offset="0" stop-color="#75e14f" /><stop offset="1" stop-color="#2da726" /></radialGradient>
        <linearGradient id="flag" x1="0" y1="0" x2="1" y2="0"><stop offset="0" stop-color="#1d358f" /><stop offset=".35" stop-color="#6389e4" /><stop offset=".55" stop-color="#233fb0" /><stop offset=".8" stop-color="#5c83e2" /><stop offset="1" stop-color="#243c9d" /></linearGradient>
        <linearGradient id="cone" x1="0" y1="0" x2="1" y2="1"><stop offset="0" stop-color="#95a2ac" /><stop offset=".5" stop-color="#ccd5da" /><stop offset="1" stop-color="#97a3ae" /></linearGradient>
        <linearGradient id="brick" x1="0" y1="0" x2="1" y2="1"><stop offset="0" stop-color="#a65241" /><stop offset="1" stop-color="#763528" /></linearGradient>
      </defs>
    </svg>
  </div>
</template>

<style>
body {
  margin: 0;
  background: #fff;
}
</style>

<style scoped>
.page {
  position: relative;
  font-family: Georgia, Gelasio, "Liberation Serif", serif;
  font-size: 16px;
  line-height: 19px;
}

.header {
  padding: 21px 16px 18px;
  background: #aaa;
  color: #fff;
  text-align: center;
}

.header h1 {
  margin: 0;
  font-size: 32px;
  line-height: 36px;
  font-weight: 700;
}

.grid {
  display: grid;
  grid-template-columns: repeat(auto-fill, 250px);
  gap: 15px 5px;
  padding: 9px 8px 18px;
}

.tile {
  display: flex;
  align-items: center;
  min-height: 50px;
  color: #4f8a10;
  text-decoration: none;
}

.tile:hover,
.tile.active {
  box-shadow: 0 0 5px rgba(0, 0, 0, 0.6);
}

.icon {
  display: block;
  flex: none;
}

.label {
  white-space: pre;
}

.footer {
  padding: 16px 16px 14px;
  background: #aaa;
  color: #fff;
  text-align: center;
}

.paints {
  position: absolute;
}
</style>
